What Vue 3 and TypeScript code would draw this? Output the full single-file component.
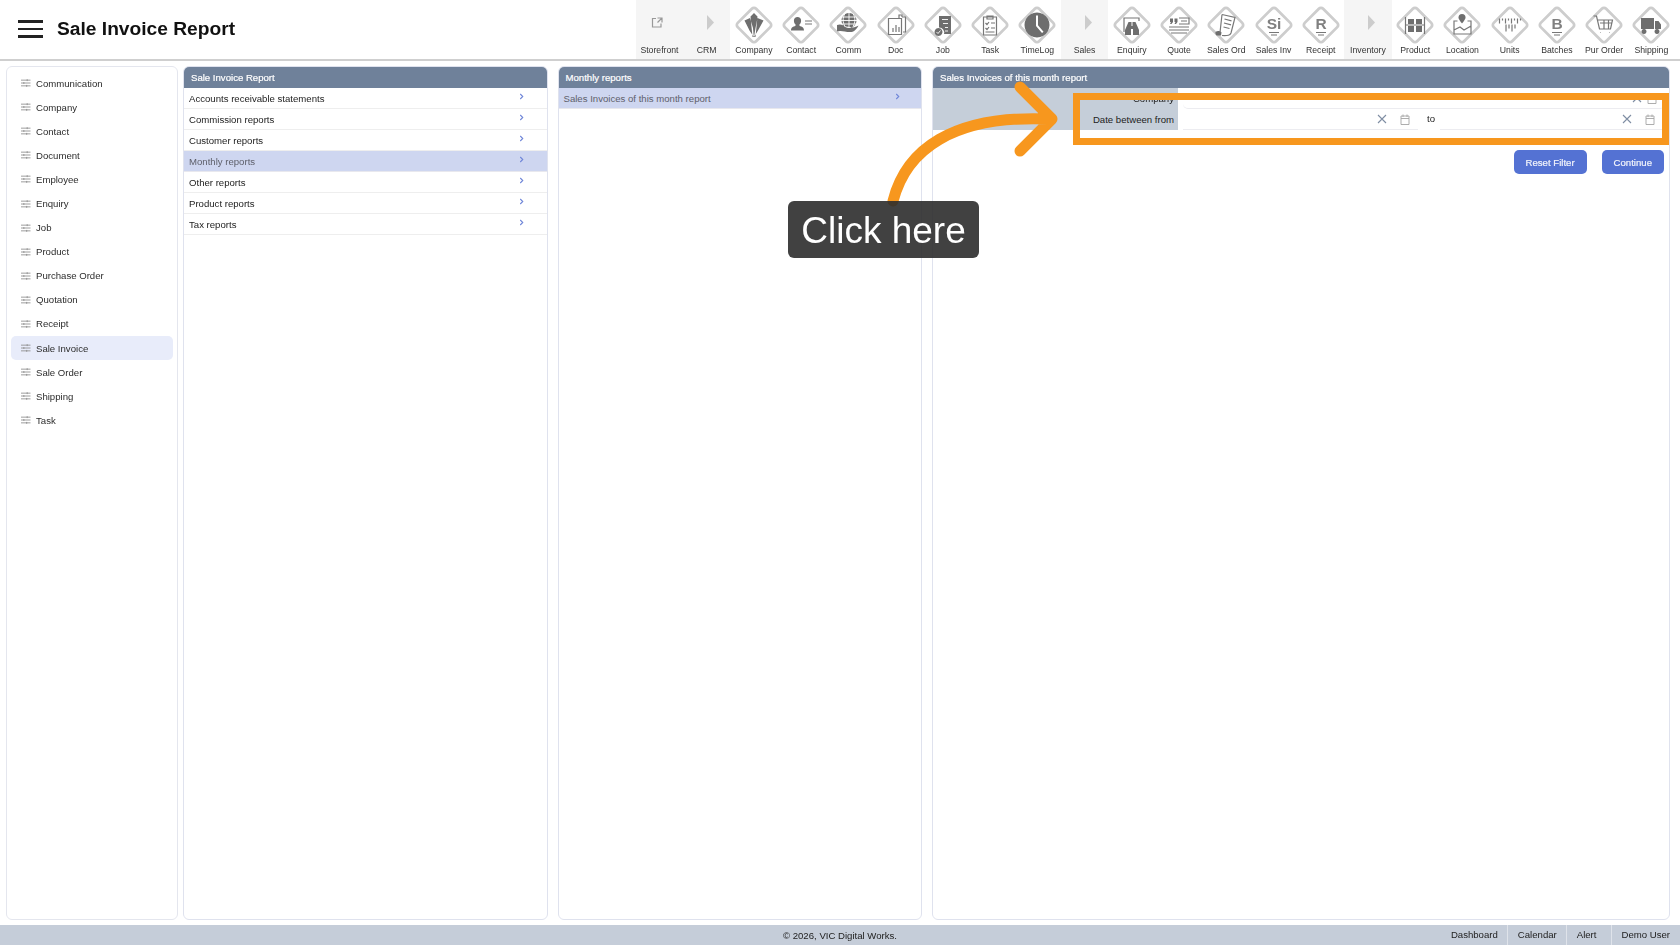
<script setup lang="ts">
interface Tool {
  label: string
  kind: 'diamond' | 'arrow' | 'link'
  group?: boolean
  fill?: string
  line?: string
  white?: string
  letter?: string
}

const tools: Tool[] = [
  { label: 'Storefront', kind: 'link', group: true },
  { label: 'CRM', kind: 'arrow', group: true },
  { label: 'Company', kind: 'diamond', fill: 'M10.500 15.500l5.500-2.500 3 10 .8 9-4.300-6.500zM16.500 11.500l3.500-3.500 3.500 3.500-2 20.500h-3zM23.500 13l6 2.500-5.500 10-4 6.500 1.500-9z' },
  { label: 'Contact', kind: 'diamond', fill: 'M16.500 12a3.600 3.600 0 0 1 3.600 3.800c0 1.800-.9 3.200-1.800 4l.4 1.200c2 .6 4.300 1.200 4.300 4.500H10c0-3.300 2.300-3.900 4.300-4.500l.4-1.200c-.9-.8-1.800-2.200-1.800-4a3.600 3.600 0 0 1 3.600-3.800z', line: 'M24 16h7M24 19h7' },
  { label: 'Comm', kind: 'diamond', fill: 'M21 8a7.500 7.500 0 1 1-.01 0zM9 20c4-1.500 6 .5 9 1.500 3 .6 5 .4 6.500 1 2 .2 4-1 6-2-1 2.500-4 6-7 6.500-4 .5-8-1-11-1-1 0-2 .3-3.500.3z', white: 'M13.500 12h15M13 15.500h16M14 19h14M21 8v14M17 8.500c-2.500 4-2.500 9 0 13M25 8.500c2.500 4 2.500 9 0 13' },
  { label: 'Doc', kind: 'diamond', line: 'M12.500 13.500h13v16h-13zM26 12h3.500v15H27M17 27v-4M20 27v-7M23 27v-5M23 13v-3h3v2' },
  { label: 'Job', kind: 'diamond', fill: 'M16 11h12v18h-7a5 5 0 0 0-5-6.500zM15.500 23a4 4 0 1 0 .01 0z', white: 'M19 14.500h6M20 18.500h5M22 22.500h3M22 26h3M13.500 27l1.500 1.500 2.500-3' },
  { label: 'Task', kind: 'diamond', line: 'M13.500 12h13v18h-13zM17 11h6v3h-6zM15.500 18l1.500 1.500 2-2.500M21 18h4M15.500 23l1.500 1.500 2-2.500M21 23h4M15.500 27h9' },
  { label: 'TimeLog', kind: 'diamond', fill: 'M20 7.500a12.500 12.500 0 1 1-.01 0zM19 10.500V21l6 7 1.500-1.300-5.500-6.500v-9.700z' },
  { label: 'Sales', kind: 'arrow', group: true },
  { label: 'Enquiry', kind: 'diamond', fill: 'M16.500 17h3v4h1v-4h3l3.500 8v5h-6v-6h-2v6h-6v-5z', line: 'M12 27V13h15v3' },
  { label: 'Quote', kind: 'diamond', fill: 'M11 13.500h3v3.500l-1.500 2h-1.500l1-2h-1zM15.500 13.500h3v3.500l-1.500 2h-1.500l1-2h-1z', line: 'M20 13h10v6H20M22 16h6M10 22h20M10 25h20M12 28h16' },
  { label: 'Sales Ord', kind: 'diamond', fill: 'M9.500 27c2-1.500 5-1 6 .5l-.5 3h-4c-1 0-2-2-1.500-3.500z', line: 'M16 9.500l13 3-4 15.500c-1 2.500-3 2.700-9 2.500M14 27.500L16 9.500M18.500 14l7 1.800M18 18l7 1.800M17.500 22l6 1.500' },
  { label: 'Sales Inv', kind: 'diamond', letter: 'Si', line: 'M15 27.500h10M17 30h6' },
  { label: 'Receipt', kind: 'diamond', letter: 'R', line: 'M15 27.500h10M17 30h6' },
  { label: 'Inventory', kind: 'arrow', group: true },
  { label: 'Product', kind: 'diamond', fill: 'M13 14h6v5h-6zM21 14h6v5h-6zM13 21h6v6h-6zM21 21h6v6h-6z', line: 'M10.500 12v17M29.500 12v17M10.500 20h19' },
  { label: 'Location', kind: 'diamond', fill: 'M20 9a3.500 3.500 0 0 1 3.500 3.500c0 2.200-3.500 6-3.500 6s-3.500-3.800-3.500-6A3.500 3.500 0 0 1 20 9z', line: 'M15.500 16H12v13h17V16h-3.500M12 25l6-3 4 3 7-4' },
  { label: 'Units', kind: 'diamond', line: 'M9.500 13.500v5M12.500 13.500v2M15.500 13.500v5M18.500 13.500v2M21.500 13.500v5M24.500 13.500v2M27.500 13.500v5M30.500 13.500v2M16 19.500v7M19 19.500v4M22 19.500v7M25 19.500v4' },
  { label: 'Batches', kind: 'diamond', letter: 'B', line: 'M15 27.500h10M17 30h6' },
  { label: 'Pur Order', kind: 'diamond', line: 'M9.500 11h3l3 13h11l2-9H14M16 27.500h.5M25 27.500h.5M16 18h12M20 15v9M24.500 15v9' },
  { label: 'Shipping', kind: 'diamond', fill: 'M10 13h13v11H10zM24 16h3.500l2.500 3.500V24h-6zM13 24a2.500 2.500 0 1 0 .01 0zM26 24a2.500 2.500 0 1 0 .01 0z' },
]

const menu = ['Communication', 'Company', 'Contact', 'Document', 'Employee', 'Enquiry', 'Job', 'Product', 'Purchase Order', 'Quotation', 'Receipt', 'Sale Invoice', 'Sale Order', 'Shipping', 'Task']

const reports = ['Accounts receivable statements', 'Commission reports', 'Customer reports', 'Monthly reports', 'Other reports', 'Product reports', 'Tax reports']

const footerLinks = ['Dashboard', 'Calendar', 'Alert', 'Demo User']
</script>

<template>
  <div class="app">
    <header class="topbar">
      <button class="burger" aria-label="Menu"><span></span><span></span><span></span></button>
      <h1 class="title">Sale Invoice Report</h1>
      <nav class="tools">
        <div v-for="t in tools" :key="t.label" class="tool" :class="{ grouped: t.group }">
          <svg v-if="t.kind === 'diamond'" class="tool-icon" viewBox="0 0 40 40">
            <rect class="diamond" x="7" y="7" width="26" height="26" rx="3" transform="rotate(45 20 20)" />
            <path v-if="t.fill" :d="t.fill" class="ic-fill" fill-rule="evenodd" />
            <path v-if="t.white" :d="t.white" class="ic-white" />
            <path v-if="t.line" :d="t.line" class="ic-line" />
            <text v-if="t.letter" x="20" y="24" class="ic-letter">{{ t.letter }}</text>
          </svg>
          <svg v-else-if="t.kind === 'arrow'" class="tool-icon" viewBox="0 0 40 40">
            <path d="M20 10v15l7-7.500z" class="ic-arrow" />
          </svg>
          <svg v-else class="tool-icon" viewBox="0 0 40 40">
            <path d="M17 13.500h-3.500V22H22v-3.500M18.500 13H23v4.500M23 13l-4.500 4.500" class="ic-link" />
          </svg>
          <span class="tool-label">{{ t.label }}</span>
        </div>
      </nav>
    </header>

    <main class="main">
      <aside class="sidebar">
        <a v-for="m in menu" :key="m" class="side-item" :class="{ active: m === 'Sale Invoice' }">
          <svg class="side-icon" viewBox="0 0 10 8">
            <path d="M0 1h10M0 4h10M0 7h10M6.500 0v2M3 3v2M6 6v2" />
          </svg>
          {{ m }}
        </a>
      </aside>

      <section class="panel">
        <div class="panel-head">Sale Invoice Report</div>
        <div v-for="r in reports" :key="r" class="row" :class="{ active: r === 'Monthly reports' }">
          <span>{{ r }}</span>
          <svg class="chev" viewBox="0 0 6 8"><path d="M1.500 1l3 3-3 3" /></svg>
        </div>
      </section>

      <section class="panel">
        <div class="panel-head">Monthly reports</div>
        <div class="row active">
          <span>Sales Invoices of this month report</span>
          <svg class="chev chev-b" viewBox="0 0 6 8"><path d="M1.500 1l3 3-3 3" /></svg>
        </div>
      </section>

      <section class="panel panel-wide">
        <div class="panel-head">Sales Invoices of this month report</div>
        <div class="form-row">
          <label class="form-label">Company</label>
          <div class="field field-full">
            <svg class="x" viewBox="0 0 10 10"><path d="M1 1l8 8M9 1l-8 8" /></svg>
            <svg class="cal" viewBox="0 0 10 11"><path d="M1 2h8v8.500H1zM1 4.500h8M3 .5v2.500M7 .5v2.500" /></svg>
          </div>
        </div>
        <div class="form-row">
          <label class="form-label">Date between from</label>
          <div class="field field-from">
            <svg class="x" viewBox="0 0 10 10"><path d="M1 1l8 8M9 1l-8 8" /></svg>
            <svg class="cal" viewBox="0 0 10 11"><path d="M1 2h8v8.500H1zM1 4.500h8M3 .5v2.500M7 .5v2.500" /></svg>
          </div>
          <span class="to">to</span>
          <div class="field field-to">
            <svg class="x" viewBox="0 0 10 10"><path d="M1 1l8 8M9 1l-8 8" /></svg>
            <svg class="cal" viewBox="0 0 10 11"><path d="M1 2h8v8.500H1zM1 4.500h8M3 .5v2.500M7 .5v2.500" /></svg>
          </div>
        </div>
        <div class="actions">
          <button class="btn">Reset Filter</button>
          <button class="btn">Continue</button>
        </div>
      </section>
    </main>

    <footer class="footer">
      <span class="copy">© 2026, VIC Digital Works.</span>
      <div class="foot-links">
        <a v-for="f in footerLinks" :key="f" class="foot-link">{{ f }}</a>
      </div>
    </footer>

    <svg class="annotation" viewBox="0 0 1680 945">
      <rect x="1076.500" y="96.500" width="589" height="45" class="box" />
      <path d="M893 201C906 150 952 115 1048 119M1020 87l32 32-32 32" class="curve" />
    </svg>
    <div class="callout">Click here</div>
  </div>
</template>

<style>
html, body { margin: 0; overflow: hidden; background: #fff; }
</style>

<style scoped>
.app {
  position: relative;
  height: 945px;
  display: flex;
  flex-direction: column;
  font-family: "Liberation Sans", Arial, sans-serif;
  font-size: 9.6px;
  color: #333;
  filter: blur(0.45px);
}
.topbar {
  height: 59px;
  flex: none;
  display: flex;
  align-items: flex-start;
  border-bottom: 2px solid #cfcfcf;
  padding-right: 5px;
}
.burger {
  width: 25px;
  margin: 20px 0 0 18px;
  padding: 0;
  border: 0;
  background: none;
  display: flex;
  flex-direction: column;
  gap: 5px;
}
.burger span { height: 2.500px; background: #222; }
.title {
  margin: 19px 0 0 14px;
  font-size: 19.200px;
  line-height: 20px;
  font-weight: 700;
  color: #111;
}
.tools { margin-left: auto; display: flex; height: 59px; }
.tool {
  width: 47.240px;
  display: flex;
  flex-direction: column;
  align-items: center;
}
.tool.grouped { background: #f5f5f5; }
.tool-icon { width: 40px; height: 40px; margin-top: 4.500px; overflow: visible; }
.tool-label { margin-top: .5px; font-size: 8.700px; line-height: 10px; color: #333; white-space: nowrap; }
.diamond { fill: #fff; stroke: #cdcdcd; stroke-width: 2.800; }
.ic-fill { fill: #6e6e6e; }
.ic-line { fill: none; stroke: #777; stroke-width: 1.200; }
.ic-white { fill: none; stroke: #fff; stroke-width: 0.900; }
.ic-letter { font-size: 15.500px; font-weight: 700; fill: #808080; text-anchor: middle; }
.ic-arrow { fill: #cccccc; }
.ic-link { fill: none; stroke: #999; stroke-width: 1.200; }

.main {
  flex: 1;
  min-height: 0;
  display: flex;
  padding: 5px 10px 4.500px 6px;
}
.sidebar {
  width: 172px;
  flex: none;
  box-sizing: border-box;
  margin-right: 5px;
  padding: 4px 4px;
  border: 1px solid #e4e6ee;
  border-radius: 6px;
}
.side-item {
  height: 24.100px;
  display: flex;
  align-items: center;
  gap: 5.500px;
  padding-left: 10px;
  border-radius: 5px;
  color: #2c2c2c;
}
.side-item.active { background: #e8ecfa; }
.side-icon { width: 9.500px; height: 8px; flex: none; }
.side-icon path { fill: none; stroke: #8c8c8c; stroke-width: 0.900; }

.panel {
  width: 364.500px;
  flex: none;
  box-sizing: border-box;
  border: 1px solid #dfe2ee;
  border-radius: 6px;
  overflow: hidden;
}
.panel + .panel { margin-left: 10px; }
.panel-wide { flex: 1; width: auto; }
.panel-head {
  height: 22px;
  margin: -1px -1px 0;
  padding-left: 8px;
  display: flex;
  align-items: center;
  background: #6f819a;
  color: #fff;
  font-size: 9.600px;
  -webkit-text-stroke: 0.2px #fff;
}
.row {
  height: 21px;
  box-sizing: border-box;
  display: flex;
  align-items: center;
  justify-content: space-between;
  padding: 0 23px 0 5px;
  border-bottom: 1px solid #eeeeee;
  color: #222;
}
.row.active { background: #ced6f0; color: #5e606b; border-bottom-color: #e8e8ee; }
.chev { width: 5px; height: 7px; margin-top: -3px; }
.chev path { fill: none; stroke: #6f86d8; stroke-width: 1.300; }
.chev-b { margin-right: -2px; }

.form-row { height: 21px; display: flex; align-items: stretch; }
.form-label {
  width: 245px;
  flex: none;
  box-sizing: border-box;
  display: flex;
  align-items: center;
  justify-content: flex-end;
  padding-right: 4px;
  background: #c5ced9;
  color: #222;
}
.form-row:first-of-type .form-label { padding-right: 6px; }
.field {
  display: flex;
  align-items: center;
  justify-content: flex-end;
  box-sizing: border-box;
  border-bottom: 1.500px solid #ececf0;
}
.field-full { flex: 1; margin: 0 4px 0 5px; padding-right: 8px; gap: 5px; border-radius: 0 0 5px 5px; }
.field-from { width: 235px; margin-left: 5px; padding-right: 8px; gap: 13px; }
.field-to { width: 222px; padding-right: 7px; gap: 13px; }
.to { width: 22px; box-sizing: border-box; padding-left: 4px; text-align: center; align-self: center; margin-top: -2px; color: #222; }
.x { width: 10px; height: 10px; }
.x path { fill: none; stroke: #7f8ea3; stroke-width: 1.100; }
.cal { width: 10px; height: 11px; }
.cal path { fill: none; stroke: #a5a5a5; stroke-width: 0.900; }
.actions {
  display: flex;
  justify-content: flex-end;
  gap: 15px;
  margin-top: 20px;
  padding-right: 5px;
}
.btn {
  height: 24px;
  padding: 0 12px;
  border: 0;
  border-radius: 5px;
  background: #5472d3;
  color: #f2f4fb;
  font-family: inherit;
  font-size: 9.600px;
  -webkit-text-stroke: 0.2px #f2f4fb;
}

.footer {
  height: 20.500px;
  flex: none;
  position: relative;
  display: flex;
  justify-content: flex-end;
  background: #c5cdd9;
  color: #222;
}
.copy {
  position: absolute;
  left: 0;
  right: 0;
  top: 5px;
  text-align: center;
  line-height: 12px;
}
.foot-links { position: relative; display: flex; }
.foot-link {
  padding: 0 10px;
  display: flex;
  align-items: center;
  border-left: 1px solid #dfe3ea;
}
.foot-link:first-child { border-left: 0; padding-right: 9px; }
.foot-link:nth-child(2) { padding-right: 9px; }
.foot-link:nth-child(3) { padding-right: 15px; }
.foot-link:nth-child(4) { padding-left: 9px; }

.annotation {
  position: absolute;
  left: 0;
  top: 0;
  width: 1680px;
  height: 945px;
  pointer-events: none;
}
.box { fill: none; stroke: #f7971e; stroke-width: 7; }
.curve { fill: none; stroke: #f7971e; stroke-width: 11; stroke-linecap: round; stroke-linejoin: round; }
.callout {
  position: absolute;
  left: 788px;
  top: 201px;
  width: 191px;
  height: 57px;
  box-sizing: border-box;
  padding-top: 2px;
  display: flex;
  align-items: center;
  justify-content: center;
  border-radius: 6px;
  background: rgba(44, 44, 44, 0.9);
  color: #fff;
  font-size: 37px;
}
</style>
